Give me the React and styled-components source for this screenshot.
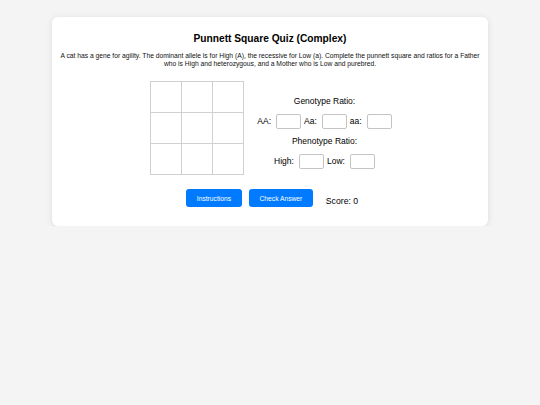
import React, { useState } from 'react';
import styled, { createGlobalStyle } from 'styled-components';

const GlobalStyle = createGlobalStyle`
    body {
        margin: 0;
        background: #f4f4f4;
        font-family: "Liberation Sans", Arial, sans-serif;
        color: #000;
    }
`;

const Card = styled.main`
    width: 436px;
    box-sizing: border-box;
    margin: 17px auto 0;
    padding: 15px 6px 19px;
    background: #fff;
    border-radius: 6px;
    box-shadow: 0 1px 6px rgba(0, 0, 0, 0.1);
    text-align: center;
`;

const Title = styled.h1`
    margin: 0 0 6px;
    font-size: 10.2px;
    line-height: 14px;
    font-weight: bold;
`;

const Prompt = styled.p`
    margin: 0 0 13px;
    font-size: 6.72px;
    line-height: 8px;
    color: #111;
`;

const Workspace = styled.div`
    display: flex;
    justify-content: center;
    align-items: center;
    gap: 13px;
    padding-left: 2px;
`;

const Square = styled.div`
    display: grid;
    grid-template-columns: repeat(3, 30px);
    grid-template-rows: repeat(3, 30px);
    gap: 1px;
    padding: 1px;
    background: #d0d0d0;
`;

const Cell = styled.div`
    background: #fff;
`;

const Ratios = styled.div`
    display: flex;
    flex-direction: column;
    align-items: center;
    gap: 7px;
    padding-top: 8px;
    font-size: 8.5px;
`;

const Heading = styled.div`
    line-height: 11px;
`;

const Row = styled.div`
    display: flex;
    align-items: center;
`;

const Label = styled.label`
    margin: 0 5px 0 ${(p) => (p.$first ? 0 : 3)}px;
`;

const Box = styled.input`
    width: 25px;
    height: 15px;
    box-sizing: border-box;
    border: 1px solid #c4c4c4;
    border-radius: 2px;
    padding: 0 2px;
    font-size: 8px;
`;

const Actions = styled.div`
    display: flex;
    justify-content: center;
    align-items: center;
    gap: 7px;
    margin-top: 14px;
    padding-left: 4px;
`;

const Button = styled.button`
    height: 18px;
    padding: 0 ${(p) => p.$pad}px;
    border: none;
    border-radius: 3px;
    background: #007bff;
    color: #fff;
    font-family: inherit;
    font-size: 6.7px;
    cursor: pointer;
`;

const Score = styled.span`
    margin: 6px 0 0 6px;
    font-size: 8.7px;
`;

const genotypes = ['AA', 'Aa', 'aa'];
const phenotypes = ['High', 'Low'];

export default function App() {
    const [score] = useState(0);
    return (
        <>
            <GlobalStyle />
            <Card>
                <Title>Punnett Square Quiz (Complex)</Title>
                <Prompt>
                    A cat has a gene for agility. The dominant allele is for High (A), the recessive for Low (a). Complete the punnett square and ratios for a Father who is High and heterozygous, and a Mother who is Low and purebred.
                </Prompt>
                <Workspace>
                    <Square>
                        {Array.from({ length: 9 }, (_, i) => (
                            <Cell key={i} />
                        ))}
                    </Square>
                    <Ratios>
                        <Heading>Genotype Ratio:</Heading>
                        <Row>
                            {genotypes.map((g, i) => (
                                <React.Fragment key={g}>
                                    <Label $first={i === 0}>{g}:</Label>
                                    <Box type="text" />
                                </React.Fragment>
                            ))}
                        </Row>
                        <Heading>Phenotype Ratio:</Heading>
                        <Row>
                            {phenotypes.map((p, i) => (
                                <React.Fragment key={p}>
                                    <Label $first={i === 0}>{p}:</Label>
                                    <Box type="text" />
                                </React.Fragment>
                            ))}
                        </Row>
                    </Ratios>
                </Workspace>
                <Actions>
                    <Button $pad={11}>Instructions</Button>
                    <Button $pad={10.5}>Check Answer</Button>
                    <Score>Score: {score}</Score>
                </Actions>
            </Card>
        </>
    );
}
